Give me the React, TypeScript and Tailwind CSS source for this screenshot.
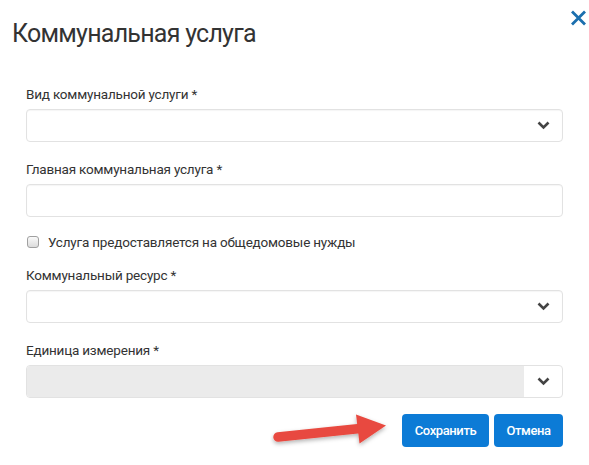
import React from "react";

const Chevron = () => (
  <svg width="13" height="9" viewBox="0 0 13 9" className="block">
    <path d="M1.5 1.5 L6.5 6.5 L11.5 1.5" fill="none" stroke="#444" strokeWidth="2.6" strokeLinecap="butt" strokeLinejoin="miter" />
  </svg>
);

const Label = ({ children }: { children: React.ReactNode }) => (
  <div className="text-[13.5px] tracking-[-0.2px] leading-[20px] text-[#333] mb-[5px]">{children}</div>
);

const SelectBox = () => (
  <div className="h-[33px] border border-[#e2e2e2] rounded-[4px] bg-white flex items-center justify-end pr-[12px] shadow-[inset_0_1px_1px_rgba(0,0,0,0.04)]">
    <Chevron />
  </div>
);

export default function App() {
  return (
    <div
      className="relative w-[589px] h-[465px] bg-white overflow-hidden"
      style={{ fontFamily: "Roboto, 'Noto Sans', Arial, sans-serif" }}
    >
      <div className="pl-[12px] pt-[18px] text-[25px] tracking-[-0.75px] leading-[32px] text-[#333]">Коммунальная услуга</div>
      <button className="absolute top-[9px] right-[2px] w-[18px] h-[17px] flex items-center justify-center">
        <svg width="17" height="16" viewBox="0 0 17 16">
          <path d="M2 1.5 L15 14.5 M15 1.5 L2 14.5" stroke="#1b6fae" strokeWidth="2.8" strokeLinecap="butt" />
        </svg>
      </button>

      <div className="px-[26px] pt-[34px]">
        <Label>Вид коммунальной услуги *</Label>
        <SelectBox />

        <div className="mt-[17px]">
          <Label>Главная коммунальная услуга *</Label>
          <div className="h-[33px] border border-[#e2e2e2] rounded-[4px] bg-white shadow-[inset_0_1px_1px_rgba(0,0,0,0.04)]" />
        </div>

        <div className="mt-[15px] h-[20px] flex items-center text-[13.5px] tracking-[-0.2px] text-[#333]">
          <div className="w-[12px] h-[12px] ml-[1px] mr-[9px] rounded-[3px] border border-[#a0a0a0] bg-gradient-to-b from-[#fafafa] to-[#dcdcdc]" />
          <span className="leading-[20px]">Услуга предоставляется на общедомовые нужды</span>
        </div>

        <div className="mt-[13px]">
          <Label>Коммунальный ресурс *</Label>
          <SelectBox />
        </div>

        <div className="mt-[17px]">
          <Label>Единица измерения *</Label>
          <div className="h-[33px] border border-[#e2e2e2] rounded-[4px] bg-white flex overflow-hidden">
            <div className="flex-1 bg-[#ebebeb]" />
            <div className="w-[38px] flex items-center justify-center">
              <Chevron />
            </div>
          </div>
        </div>

        <div className="mt-[16px] flex justify-end gap-[5px]">
          <button className="h-[33px] w-[87px] rounded-[4px] bg-[#0c7bd6] text-white text-[13px] font-medium tracking-[-0.4px]">Сохранить</button>
          <button className="h-[33px] w-[69px] rounded-[4px] bg-[#0c7bd6] text-white text-[13px] font-medium tracking-[-0.4px]">Отмена</button>
        </div>
      </div>

      <svg className="absolute left-[270px] top-[405px]" width="125" height="50" viewBox="270 405 125 50">
        <defs>
          <filter id="sh" x="-20%" y="-40%" width="140%" height="180%">
            <feDropShadow dx="0" dy="2" stdDeviation="2" floodColor="#000" floodOpacity="0.3" />
          </filter>
        </defs>
        <g filter="url(#sh)" fill="#e84a3f">
          <path d="M278 437 L360 428.5" stroke="#e84a3f" strokeWidth="9.5" strokeLinecap="round" />
          <polygon points="356,414.5 386,425.5 359.5,443.5" />
        </g>
      </svg>
    </div>
  );
}
